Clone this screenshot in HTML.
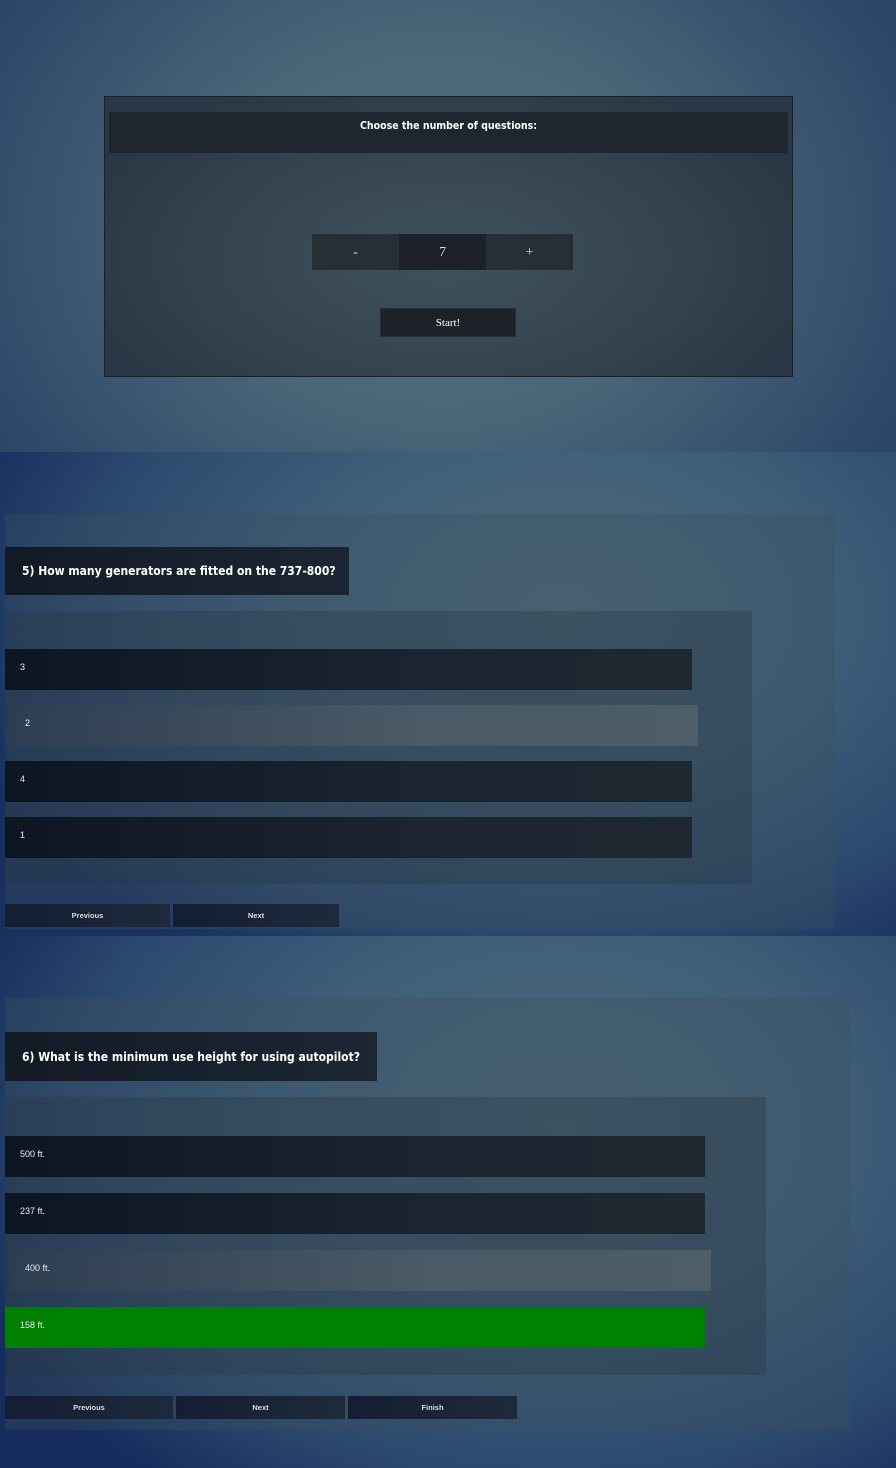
<!DOCTYPE html>
<html><head><meta charset="utf-8"><style>
*{margin:0;padding:0;box-sizing:border-box}
body{width:896px;height:1468px;position:relative;overflow:hidden;font-family:"Liberation Sans",sans-serif;color:#fff}
.abs{position:absolute}
#s1{left:0;top:0;width:896px;height:452px;background:radial-gradient(ellipse 520px 420px at 440px 230px,#56707f 0%,#4a6678 45%,#3a5470 75%,#2c4466 100%)}
#s2{left:0;top:452px;width:896px;height:484px;background:radial-gradient(ellipse 620px 420px at 560px 160px,#4e6a7a 0%,#40607a 40%,#2c4a6e 75%,#173060 100%)}
#s3{left:0;top:936px;width:896px;height:532px;background:radial-gradient(ellipse 640px 460px at 560px 190px,#4e6a7a 0%,#40607a 40%,#2c4a6e 75%,#152c5c 100%)}
.panel{left:104px;top:96px;width:689px;height:281px;border:1px solid #1a2028;background:radial-gradient(ellipse 380px 200px at 340px 160px,#3f525c 0%,#34444f 60%,#2a3746 100%)}
.hdr{left:109px;top:112px;width:679px;height:41px;background:#1e2630;font-weight:bold;font-size:10.5px;text-align:center;padding-top:8px;font-family:"DejaVu Sans Condensed","DejaVu Sans",sans-serif}
.cell{top:234px;width:87px;height:36px;text-align:center;line-height:38px;font-family:"Liberation Serif",serif;font-size:14px;color:#ddd}
.start{left:380px;top:308px;width:136px;height:29px;background:#1c2228;border:1px solid #2a3038;text-align:center;line-height:29px;font-family:"Liberation Serif",serif;font-size:11px}
.cont{background:rgba(60,80,95,0.35)}
.q{background:linear-gradient(90deg,#121a26,#1c2733);font-family:"DejaVu Sans Condensed","DejaVu Sans",sans-serif;font-weight:bold;font-size:12px;padding-left:17px}
.ans{background:rgba(40,55,65,0.35)}
.a{height:41px;background:linear-gradient(90deg,#0e1522,#1b2430 60%,#1f2830);font-size:9px;padding-left:15px;line-height:36px;color:#eee}
.a.h{background:linear-gradient(90deg,#2e3e52,#4a5a66 60%,#4e5e68);}
.a.g{background:#008000}
.b{height:23px;background:linear-gradient(90deg,#131d33,#1e2a3c);font-size:7.5px;text-align:center;line-height:23px;color:#ddd;font-weight:bold}
</style></head><body>
<div id="s1" class="abs"></div>
<div id="s2" class="abs"></div>
<div id="s3" class="abs"></div>

<div class="abs panel"></div>
<div class="abs hdr">Choose the number of questions:</div>
<div class="abs cell" style="left:312px;background:#262e36">-</div>
<div class="abs cell" style="left:399px;background:#1c2228">7</div>
<div class="abs cell" style="left:486px;background:#262e36">+</div>
<div class="abs start">Start!</div>

<div class="abs cont" style="left:5px;top:514px;width:830px;height:415px"></div>
<div class="abs q" style="left:5px;top:547px;width:344px;height:48px;line-height:49px">5) How many generators are fitted on the 737-800?</div>
<div class="abs ans" style="left:5px;top:611px;width:747px;height:273px"></div>
<div class="abs a" style="left:5px;top:649px;width:687px">3</div>
<div class="abs a h" style="left:10px;top:705px;width:688px">2</div>
<div class="abs a" style="left:5px;top:761px;width:687px">4</div>
<div class="abs a" style="left:5px;top:817px;width:687px">1</div>
<div class="abs b" style="left:5px;top:904px;width:165px">Previous</div>
<div class="abs b" style="left:173px;top:904px;width:166px">Next</div>

<div class="abs cont" style="left:5px;top:998px;width:845px;height:432px"></div>
<div class="abs q" style="left:5px;top:1032px;width:372px;height:49px;line-height:50px">6) What is the minimum use height for using autopilot?</div>
<div class="abs ans" style="left:5px;top:1097px;width:761px;height:278px"></div>
<div class="abs a" style="left:5px;top:1136px;width:700px">500 ft.</div>
<div class="abs a" style="left:5px;top:1193px;width:700px">237 ft.</div>
<div class="abs a h" style="left:10px;top:1250px;width:701px">400 ft.</div>
<div class="abs a g" style="left:5px;top:1307px;width:700px">158 ft.</div>
<div class="abs b" style="left:5px;top:1396px;width:168px">Previous</div>
<div class="abs b" style="left:176px;top:1396px;width:169px">Next</div>
<div class="abs b" style="left:348px;top:1396px;width:169px">Finish</div>
</body></html>
